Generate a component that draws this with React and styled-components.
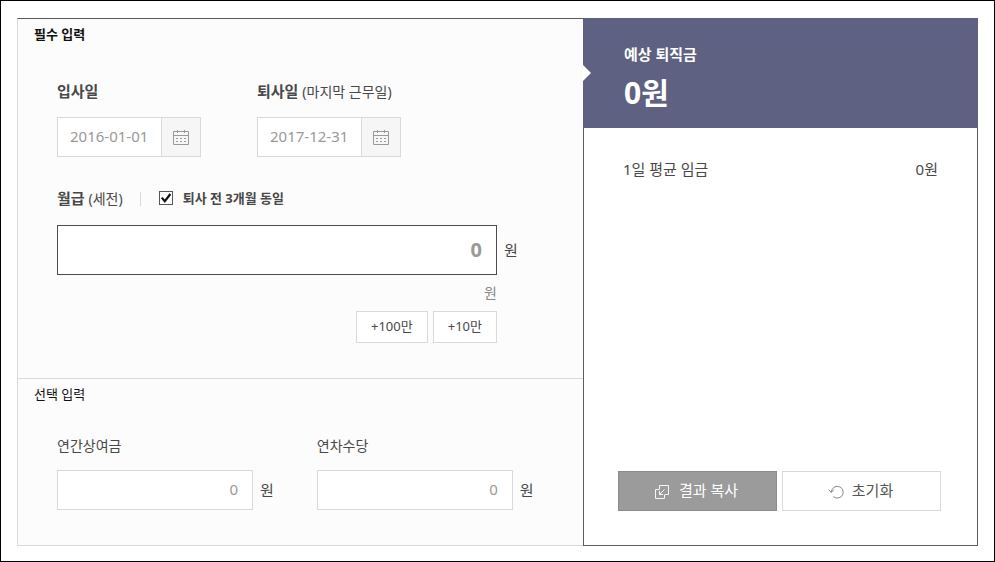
import React, { useState } from 'react';
import styled, { createGlobalStyle } from 'styled-components';

const GlobalStyle = createGlobalStyle`
  * {
    box-sizing: border-box;
  }

  body {
    margin: 0;
    background: #fff;
    color: #484848;
    font-family: 'Noto Sans', 'Noto Sans CJK KR', sans-serif;
    font-size: 15px;
    line-height: 20px;
  }

  button,
  input {
    margin: 0;
    font: inherit;
    color: inherit;
  }
`;

const Page = styled.main`
  display: flex;
  min-height: 100vh;
  padding: 17px 16px 15px;
  border: 1px solid #000;
`;

const Calculator = styled.div`
  flex: 1;
  display: grid;
  grid-template-columns: minmax(0, 566fr) minmax(0, 395fr);
`;

const FormPanel = styled.form`
  display: flex;
  flex-direction: column;
  background: #fcfcfc;
  border-top: 1px solid #5a5a5a;
  border-left: 1px solid #d9d9d9;
  border-bottom: 1px solid #d9d9d9;
`;

const Section = styled.section`
  padding: 5px 16px 35px;

  & + & {
    flex: 1;
    border-top: 1px solid #d9d9d9;
  }
`;

const SectionTitle = styled.h2`
  margin: 0;
  font-size: 13px;
  line-height: 20px;
  font-weight: ${(props) => (props.$strong ? 700 : 400)};
  color: #111;
`;

const Fields = styled.div`
  display: flex;
  flex-direction: column;
  gap: 31px;
  padding: ${(props) => props.$top}px 23px 0;
`;

const FieldRow = styled.div`
  display: flex;
  gap: ${(props) => props.$gap}px;
`;

const Field = styled.div`
  display: flex;
  flex-direction: column;
  gap: ${(props) => props.$gap}px;
`;

const Label = styled.label`
  font-size: ${(props) => (props.$strong ? 15 : 14)}px;
  font-weight: ${(props) => (props.$strong ? 700 : 400)};
`;

const LabelNote = styled.span`
  font-size: 14px;
  line-height: 14px;
  font-weight: 400;
`;

const DateBox = styled.div`
  display: flex;
  width: 144px;
  height: 40px;
  border: 1px solid #d9d9d9;
  background: #fff;
`;

const DateInput = styled.input`
  flex: 1;
  min-width: 0;
  padding: 0 0 2px 12px;
  border: 0;
  background: none;
  color: #999;
`;

const CalendarButton = styled.button`
  display: flex;
  align-items: center;
  justify-content: center;
  width: 39px;
  padding: 0;
  border: 0;
  border-left: 1px solid #d9d9d9;
  background: #f6f6f6;
  color: #999;
`;

const SalaryHead = styled.div`
  display: flex;
  align-items: center;
`;

const Divider = styled.span`
  width: 1px;
  height: 14px;
  margin: 2px 18px 0 17px;
  background: #d9d9d9;
`;

const CheckLabel = styled.label`
  display: flex;
  align-items: center;
  gap: 10px;
  font-size: 13px;
  font-weight: 700;
`;

const CheckWrap = styled.span`
  position: relative;
  display: flex;
  width: 14px;
  height: 14px;

  svg {
    position: absolute;
    inset: 0;
    pointer-events: none;
  }
`;

const CheckInput = styled.input`
  appearance: none;
  width: 14px;
  height: 14px;
  border: 1px solid #555;
  background: #fff;

  &:not(:checked) + svg {
    display: none;
  }
`;

const AmountRow = styled.div`
  display: flex;
  align-items: center;
  gap: 7px;
`;

const Unit = styled.span`
  padding-bottom: 1px;
`;

const SalaryInput = styled.input`
  width: 440px;
  min-width: 0;
  height: 50px;
  padding: 0 14px 2px;
  border: 1px solid #4c4c4c;
  background: #fff;
  color: #999;
  font-size: 20px;
  font-weight: 700;
  text-align: right;
`;

const AmountInput = styled.input`
  width: 196px;
  min-width: 0;
  height: 40px;
  padding: 0 14px 2px;
  border: 1px solid #d9d9d9;
  background: #fff;
  color: #999;
  text-align: right;
`;

const SalaryHelp = styled.div`
  display: flex;
  flex-direction: column;
  align-items: flex-end;
  gap: 8px;
  width: 440px;
  margin-top: -9px;
  color: #888;
  font-size: 14px;
`;

const QuickButtons = styled.div`
  display: flex;
  gap: 5px;
`;

const QuickButton = styled.button`
  height: 32px;
  padding: 0 14px 2px;
  border: 1px solid #d9d9d9;
  background: #fff;
  color: #484848;
  font-size: 13px;
`;

const ResultPanel = styled.aside`
  display: flex;
  flex-direction: column;
  border: 1px solid #5b5c66;
  border-top: 0;
  background: #fff;
`;

const ResultHeader = styled.div`
  position: relative;
  margin: 0 -1px;
  padding: 26px 41px 13px;
  background: #5e6181;
  color: #fff;

  &::before {
    content: '';
    position: absolute;
    top: 47px;
    left: 0;
    border: 8px solid transparent;
    border-left-color: #fff;
    border-right-width: 0;
  }
`;

const ResultTitle = styled.h3`
  margin: 0;
  font-size: 15px;
  line-height: 20px;
  font-weight: 700;
`;

const ResultAmount = styled.p`
  margin: 7px 0 0;
  font-size: 30px;
  line-height: 44px;
  font-weight: 700;
`;

const ResultList = styled.dl`
  flex: 1;
  margin: 0;
  padding: 31px 39px;
`;

const ResultItem = styled.div`
  display: flex;
  justify-content: space-between;

  dd {
    margin: 0;
  }
`;

const Actions = styled.div`
  display: grid;
  grid-template-columns: 1fr 1fr;
  gap: 5px;
  padding: 0 36px 34px 34px;
`;

const ActionButton = styled.button`
  display: flex;
  align-items: center;
  justify-content: center;
  gap: ${(props) => (props.$filled ? 10 : 8)}px;
  height: 40px;
  padding: 0 2px 2px 0;
  border: 1px solid ${(props) => (props.$filled ? '#8c8c8c' : '#d9d9d9')};
  background: ${(props) => (props.$filled ? '#9b9b9b' : '#fff')};
  color: ${(props) => (props.$filled ? '#fff' : '#555')};

  svg {
    margin-top: 4px;
  }
`;

function CalendarIcon() {
  return (
    <svg width="16" height="16" viewBox="0 0 16 16" fill="none" stroke="currentColor" aria-hidden="true">
      <path d="M.5 2.5h15v13H.5zM.5 6.5h15M4.5 1v3M11.5 1v3" />
      <path d="M3 9.5h10M3 12.5h10" strokeDasharray="2 2" />
    </svg>
  );
}

function CheckIcon() {
  return (
    <svg width="14" height="14" viewBox="0 0 14 14" fill="none" stroke="#111" strokeWidth="2.2" aria-hidden="true">
      <path d="M2.8 6.6l3 3.6 5.6-7.2" />
    </svg>
  );
}

function CopyIcon() {
  return (
    <svg width="14" height="14" viewBox="0 0 14 14" fill="none" stroke="currentColor" strokeOpacity="0.9" aria-hidden="true">
      <path d="M4.5 4V.5h9v9H10" />
      <path d="M4.5 4.5h-4v9h9v-4" />
      <path d="M9.5 4.5l-5 5M4.5 6v3.5H8" />
    </svg>
  );
}

function ResetIcon() {
  return (
    <svg width="16" height="14" viewBox="0 0 16 14" fill="none" stroke="#888" aria-hidden="true">
      <path d="M3.4 7.2A5.9 5.9 0 1 1 5.4 11.6" />
      <path d="M.5 4.8l2.9 2.6 2.5-2.8" />
    </svg>
  );
}

function DateField({ id, label, note, value }) {
  return (
    <Field $gap={16}>
      <Label htmlFor={id} $strong>
        {label} {note && <LabelNote>{note}</LabelNote>}
      </Label>
      <DateBox>
        <DateInput id={id} type="text" defaultValue={value} />
        <CalendarButton type="button" aria-label={label}>
          <CalendarIcon />
        </CalendarButton>
      </DateBox>
    </Field>
  );
}

function AmountField({ id, label }) {
  return (
    <Field $gap={14}>
      <Label htmlFor={id}>{label}</Label>
      <AmountRow>
        <AmountInput id={id} type="text" inputMode="numeric" defaultValue="0" />
        <Unit>원</Unit>
      </AmountRow>
    </Field>
  );
}

function App() {
  const [salary, setSalary] = useState(0);
  const [same, setSame] = useState(true);

  const handleSalary = (e) => {
    setSalary(Number(e.target.value.replace(/\D/g, '')));
  };

  return (
    <>
      <GlobalStyle />
      <Page>
        <Calculator>
          <FormPanel>
            <Section>
              <SectionTitle $strong>필수 입력</SectionTitle>
              <Fields $top={37}>
                <FieldRow $gap={56}>
                  <DateField id="join" label="입사일" value="2016-01-01" />
                  <DateField id="leave" label="퇴사일" note="(마지막 근무일)" value="2017-12-31" />
                </FieldRow>
                <Field $gap={17}>
                  <SalaryHead>
                    <Label htmlFor="salary" $strong>
                      월급 <LabelNote>(세전)</LabelNote>
                    </Label>
                    <Divider />
                    <CheckLabel>
                      <CheckWrap>
                        <CheckInput
                          type="checkbox"
                          checked={same}
                          onChange={(e) => setSame(e.target.checked)}
                        />
                        <CheckIcon />
                      </CheckWrap>
                      퇴사 전 3개월 동일
                    </CheckLabel>
                  </SalaryHead>
                  <AmountRow>
                    <SalaryInput
                      id="salary"
                      type="text"
                      inputMode="numeric"
                      value={salary.toLocaleString()}
                      onChange={handleSalary}
                    />
                    <Unit>원</Unit>
                  </AmountRow>
                  <SalaryHelp>
                    <span>원</span>
                    <QuickButtons>
                      <QuickButton type="button" onClick={() => setSalary(salary + 1000000)}>
                        +100만
                      </QuickButton>
                      <QuickButton type="button" onClick={() => setSalary(salary + 100000)}>
                        +10만
                      </QuickButton>
                    </QuickButtons>
                  </SalaryHelp>
                </Field>
              </Fields>
            </Section>
            <Section>
              <SectionTitle>선택 입력</SectionTitle>
              <Fields $top={32}>
                <FieldRow $gap={43}>
                  <AmountField id="bonus" label="연간상여금" />
                  <AmountField id="leave-pay" label="연차수당" />
                </FieldRow>
              </Fields>
            </Section>
          </FormPanel>
          <ResultPanel>
            <ResultHeader>
              <ResultTitle>예상 퇴직금</ResultTitle>
              <ResultAmount>0원</ResultAmount>
            </ResultHeader>
            <ResultList>
              <ResultItem>
                <dt>1일 평균 임금</dt>
                <dd>0원</dd>
              </ResultItem>
            </ResultList>
            <Actions>
              <ActionButton type="button" $filled>
                <CopyIcon />
                결과 복사
              </ActionButton>
              <ActionButton type="button">
                <ResetIcon />
                초기화
              </ActionButton>
            </Actions>
          </ResultPanel>
        </Calculator>
      </Page>
    </>
  );
}

export default App;
